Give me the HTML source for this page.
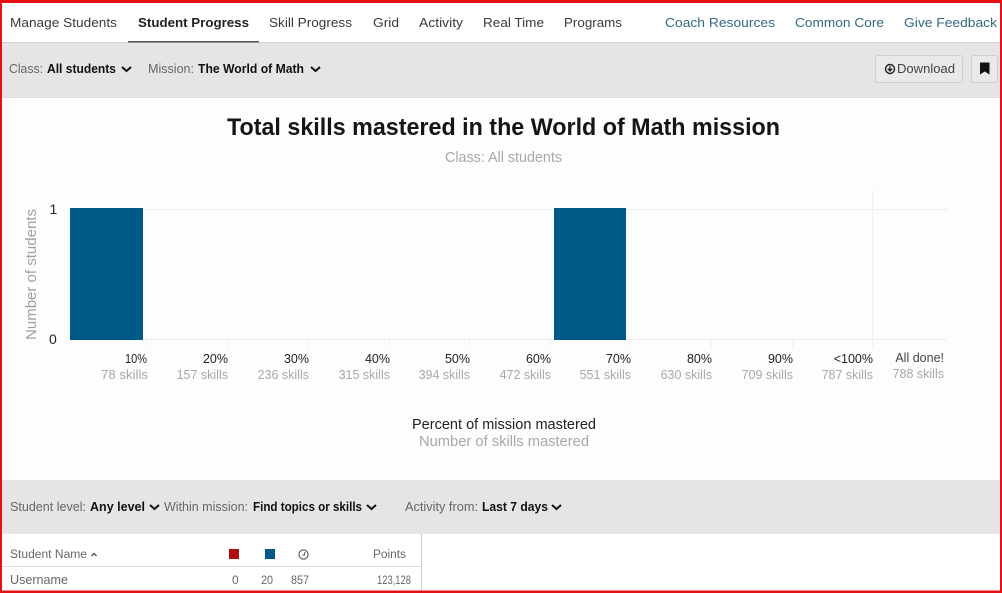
<!DOCTYPE html>
<html lang="en">
<head>
<meta charset="utf-8">
<title>Student Progress</title>
<style>
html,body{margin:0;padding:0;background:#fff;width:1002px;height:593px;overflow:hidden}
svg{display:block}
text{font-family:"Liberation Sans",sans-serif;white-space:pre}
.nav{font-size:13px;fill:#3a3a3a}
.lnk{font-size:13px;fill:#336a80}
.lbl{font-size:12.5px;fill:#666}
.b{font-size:12.5px;font-weight:bold;fill:#111}
.pct{font-size:12.5px;fill:#222;text-anchor:end}
.sk{font-size:12.5px;fill:#a8a8a8;text-anchor:end}
.th{font-size:11.5px;fill:#666}
.td{font-size:12px;fill:#666}
.chev{fill:none;stroke:#111;stroke-width:2}
</style>
</head>
<body>
<svg width="1002" height="593" viewBox="0 0 1002 593" xmlns="http://www.w3.org/2000/svg">
<rect width="1002" height="593" fill="#fff"/>
<!-- top filter bar -->
<rect x="0" y="43" width="1002" height="54" fill="#e5e5e5"/>
<rect x="0" y="42" width="1002" height="1" fill="#cfcfcf"/>
<rect x="0" y="97" width="1002" height="1" fill="#dedede"/>
<rect x="128" y="41" width="131" height="1.5" fill="#555"/>
<!-- chart background -->
<rect x="0" y="98" width="1002" height="382" fill="#fdfdfd"/>
<!-- nav -->
<text class="nav" x="10" y="27" textLength="107" lengthAdjust="spacingAndGlyphs">Manage Students</text>
<text class="nav" x="138" y="27" textLength="111" lengthAdjust="spacingAndGlyphs" style="font-weight:bold;fill:#222">Student Progress</text>
<text class="nav" x="269" y="27" textLength="83" lengthAdjust="spacingAndGlyphs">Skill Progress</text>
<text class="nav" x="373" y="27" textLength="26" lengthAdjust="spacingAndGlyphs">Grid</text>
<text class="nav" x="419" y="27" textLength="44" lengthAdjust="spacingAndGlyphs">Activity</text>
<text class="nav" x="483" y="27" textLength="61" lengthAdjust="spacingAndGlyphs">Real Time</text>
<text class="nav" x="564" y="27" textLength="58" lengthAdjust="spacingAndGlyphs">Programs</text>
<text class="lnk" x="665" y="27" textLength="110" lengthAdjust="spacingAndGlyphs">Coach Resources</text>
<text class="lnk" x="795" y="27" textLength="89" lengthAdjust="spacingAndGlyphs">Common Core</text>
<text class="lnk" x="904" y="27" textLength="93" lengthAdjust="spacingAndGlyphs">Give Feedback</text>
<!-- filter row -->
<text class="lbl" x="9" y="73" textLength="34" lengthAdjust="spacingAndGlyphs">Class:</text>
<text class="b" x="47" y="73" textLength="69" lengthAdjust="spacingAndGlyphs">All students</text>
<path class="chev" d="M122 67l4.5 4 4.5-4"/>
<text class="lbl" x="148" y="73" textLength="46" lengthAdjust="spacingAndGlyphs">Mission:</text>
<text class="b" x="198" y="73" textLength="106" lengthAdjust="spacingAndGlyphs">The World of Math</text>
<path class="chev" d="M311 67l4.5 4 4.5-4"/>
<!-- buttons -->
<rect x="875.5" y="55.5" width="87" height="27" rx="2.5" fill="#e9e9e9" stroke="#cfcfcf"/>
<circle cx="890" cy="69" r="4.5" fill="none" stroke="#222" stroke-width="1.4"/>
<path d="M890 66v4.5M887.8 68.6l2.2 2.4 2.2-2.4" fill="none" stroke="#222" stroke-width="1.3"/>
<text x="897" y="73" font-size="12.5" fill="#444" textLength="58" lengthAdjust="spacingAndGlyphs">Download</text>
<rect x="971.5" y="55.5" width="26" height="27" rx="2.5" fill="#e9e9e9" stroke="#cfcfcf"/>
<path d="M980 62.5h9.5v12l-4.75-3-4.75 3z" fill="#111"/>
<!-- titles -->
<text x="227" y="135" font-size="24" font-weight="bold" fill="#151515" textLength="553" lengthAdjust="spacingAndGlyphs">Total skills mastered in the World of Math mission</text>
<text x="445" y="162" font-size="14.5" fill="#a8a8a8" textLength="117" lengthAdjust="spacingAndGlyphs">Class: All students</text>
<!-- chart grid -->
<path d="M143 209.5H947M70 339.5H947" stroke="#eeeeee" fill="none"/>
<path d="M872.5 190V348" stroke="#f0f0f0" fill="none"/>
<path d="M146.5 340v7M227.5 340v7M308.5 340v7M389.5 340v7M469.5 340v7M550.5 340v7M630.5 340v7M711.5 340v7M792.5 340v7" stroke="#f0f0f0" fill="none"/>
<rect x="70" y="208" width="73" height="132" fill="#005a87"/>
<rect x="554" y="208" width="72" height="132" fill="#005a87"/>
<!-- y axis -->
<text transform="translate(36 340) rotate(-90)" font-size="14.5" fill="#a0a0a0" textLength="131" lengthAdjust="spacingAndGlyphs">Number of students</text>
<text x="49.5" y="214" font-size="14" fill="#222">1</text>
<text x="49" y="344" font-size="14" fill="#222">0</text>
<!-- x axis -->
<text class="pct" x="147" y="363" textLength="22" lengthAdjust="spacingAndGlyphs">10%</text><text class="sk" x="148" y="379" textLength="47" lengthAdjust="spacingAndGlyphs">78 skills</text>
<text class="pct" x="228" y="363">20%</text><text class="sk" x="228" y="379">157 skills</text>
<text class="pct" x="309" y="363">30%</text><text class="sk" x="309" y="379">236 skills</text>
<text class="pct" x="390" y="363">40%</text><text class="sk" x="390" y="379">315 skills</text>
<text class="pct" x="470" y="363">50%</text><text class="sk" x="470" y="379">394 skills</text>
<text class="pct" x="551" y="363">60%</text><text class="sk" x="551" y="379">472 skills</text>
<text class="pct" x="631" y="363">70%</text><text class="sk" x="631" y="379">551 skills</text>
<text class="pct" x="712" y="363">80%</text><text class="sk" x="712" y="379">630 skills</text>
<text class="pct" x="793" y="363">90%</text><text class="sk" x="793" y="379">709 skills</text>
<text class="pct" x="873" y="363">&lt;100%</text><text class="sk" x="873" y="379">787 skills</text>
<text class="pct" x="944" y="362" style="fill:#444">All done!</text><text class="sk" x="944" y="378">788 skills</text>
<text x="412" y="429" font-size="14.5" fill="#222" textLength="184" lengthAdjust="spacingAndGlyphs">Percent of mission mastered</text>
<text x="419" y="446" font-size="14.5" fill="#a8a8a8" textLength="170" lengthAdjust="spacingAndGlyphs">Number of skills mastered</text>
<!-- bottom filter bar -->
<rect x="0" y="480" width="1002" height="54" fill="#e5e5e5"/>
<text class="lbl" x="10" y="511" textLength="76" lengthAdjust="spacingAndGlyphs">Student level:</text>
<text class="b" x="90" y="511" textLength="55" lengthAdjust="spacingAndGlyphs">Any level</text>
<path class="chev" d="M150 505l4.5 4 4.5-4"/>
<text class="lbl" x="164" y="511" textLength="84" lengthAdjust="spacingAndGlyphs">Within mission:</text>
<text class="b" x="253" y="511" textLength="109" lengthAdjust="spacingAndGlyphs">Find topics or skills</text>
<path class="chev" d="M367 505l4.5 4 4.5-4"/>
<text class="lbl" x="405" y="511" textLength="73" lengthAdjust="spacingAndGlyphs">Activity from:</text>
<text class="b" x="482" y="511" textLength="66" lengthAdjust="spacingAndGlyphs">Last 7 days</text>
<path class="chev" d="M552 505l4.5 4 4.5-4"/>
<!-- table -->
<rect x="421" y="534" width="1" height="57" fill="#cfcfcf"/>
<rect x="0" y="566" width="421" height="1" fill="#dcdcdc"/>
<text class="th" x="10" y="558" textLength="77" lengthAdjust="spacingAndGlyphs">Student Name</text>
<path d="M91.5 556l2.5-2.5 2.5 2.5" fill="none" stroke="#555" stroke-width="1.4"/>
<rect x="229" y="549" width="10" height="10" fill="#b00d0d"/>
<rect x="265" y="549" width="10" height="10" fill="#005a87"/>
<circle cx="303.5" cy="554.5" r="4.6" fill="none" stroke="#555" stroke-width="1.1"/>
<path d="M305 552l-.6 3h-2" fill="none" stroke="#555"/>
<text class="th" x="373" y="558" textLength="33" lengthAdjust="spacingAndGlyphs">Points</text>
<text x="10" y="584" font-size="12.5" fill="#666" textLength="58" lengthAdjust="spacingAndGlyphs">Username</text>
<text class="td" x="232" y="584">0</text>
<text class="td" x="261" y="584" textLength="12" lengthAdjust="spacingAndGlyphs">20</text>
<text class="td" x="291" y="584" textLength="18" lengthAdjust="spacingAndGlyphs">857</text>
<text class="td" x="377" y="584" textLength="34" lengthAdjust="spacingAndGlyphs">123,128</text>
<!-- red frame -->
<rect x="0" y="0" width="2" height="593" fill="#e60f14"/>
<rect x="1000" y="0" width="2" height="593" fill="#e60f14"/>
<rect x="0" y="0" width="1002" height="3" fill="#e60f14"/>
<rect x="0" y="590.5" width="1002" height="2.5" fill="#e60f14"/>
</svg>
</body>
</html>
